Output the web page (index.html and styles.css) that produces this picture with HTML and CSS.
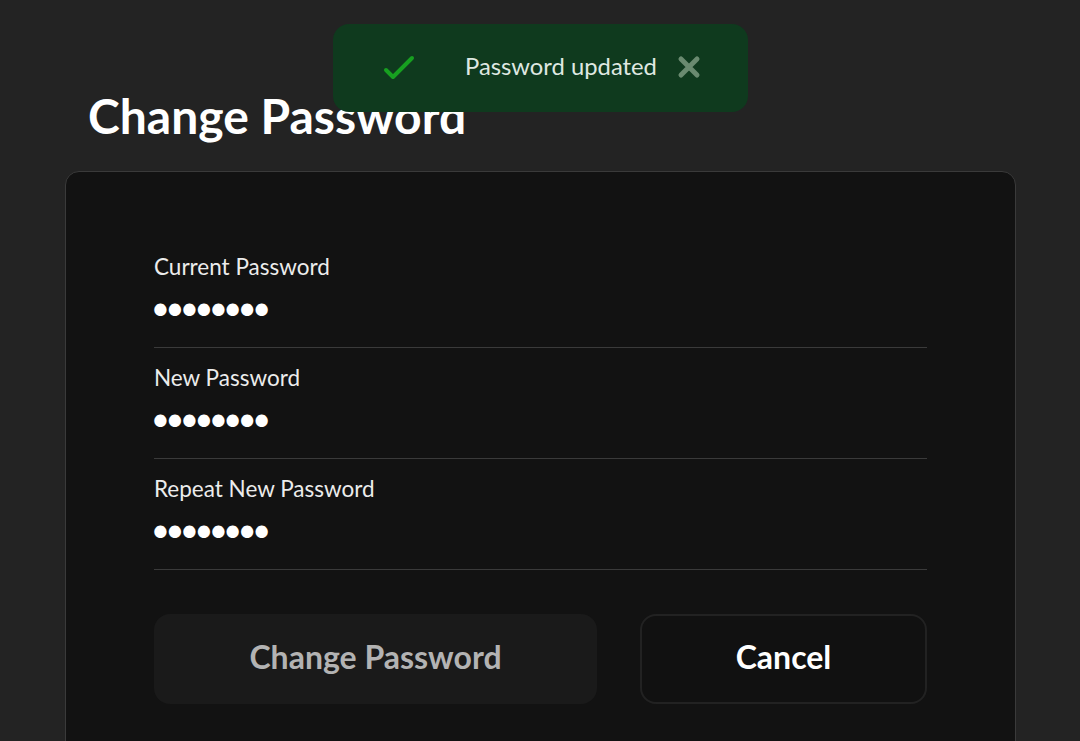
FILE: index.html
```html
<!DOCTYPE html>
<html lang="en">
<head>
    <meta charset="UTF-8">
    <meta name="viewport" content="width=device-width, initial-scale=1.0">
    <title>Change Password</title>
    <link rel="stylesheet" href="styles.css">
</head>
<body>
    <div class="page">
        <h1>Change Password</h1>

        <!-- Password form -->
        <div class="card">
            <div class="field">
                <label for="current">Current Password</label>
                <input type="password" id="current" value="password">
            </div>
            <div class="field">
                <label for="new">New Password</label>
                <input type="password" id="new" value="password">
            </div>
            <div class="field">
                <label for="repeat">Repeat New Password</label>
                <input type="password" id="repeat" value="password">
            </div>

            <div class="actions">
                <button class="btn btn-primary">Change Password</button>
                <button class="btn btn-secondary">Cancel</button>
            </div>
        </div>
    </div>

    <!-- Toast -->
    <div class="toast">
        <svg class="toast-check" width="32" height="28" viewBox="0 0 32 28">
            <path d="M3 16 L10 23 L29 4" fill="none" stroke="#17a020" stroke-width="4" stroke-linecap="round" stroke-linejoin="round"/>
        </svg>
        <span class="toast-text">Password updated</span>
        <svg class="toast-close" width="24" height="24" viewBox="0 0 24 24">
            <path d="M4 4 L20 20 M20 4 L4 20" fill="none" stroke="#6a8a70" stroke-width="5" stroke-linecap="round"/>
        </svg>
    </div>
</body>
</html>
```

FILE: styles.css
```css
:root {
    --bg-color: #232323;
    --card-bg: #121212;
    --card-border: #3a3a3a;
    --divider: #3a3a3a;
    --text-color: #f2f2f2;
    --toast-bg: #0f3a1e;
}

* {
    box-sizing: border-box;
    margin: 0;
    padding: 0;
}

body {
    background-color: var(--bg-color);
    color: var(--text-color);
    font-family: Lato, 'Noto Sans', sans-serif;
    height: 741px;
    overflow: hidden;
}

.page {
    padding: 88px 64px 0 65px;
}

h1 {
    font-size: 48px;
    font-weight: 700;
    line-height: 56px;
    margin: 0 0 27px 23px;
    color: #fff;
}

.card {
    background-color: var(--card-bg);
    border: 1px solid var(--card-border);
    border-radius: 14px;
    padding: 80px 88px 60px 88px;
    min-height: 600px;
}

.field {
    display: flex;
    flex-direction: column;
    border-bottom: 1px solid var(--divider);
    padding-bottom: 20px;
    margin-bottom: 15px;
}

.field label {
    font-size: 22.5px;
    line-height: 30px;
    color: #ececec;
    margin-bottom: 6px;
}

/* big round bullets for the masked value */
.field input {
    background: transparent;
    border: none;
    outline: none;
    color: #fff;
    font-family: 'DejaVu Sans', sans-serif;
    font-size: 42px;
    letter-spacing: -10.3px;
    height: 39px;
    line-height: 39px;
    padding: 0;
    padding-top: 8px;
    margin-left: -6px;
}

.actions {
    display: flex;
    gap: 43px;
    margin-top: 44px;
}

.btn {
    height: 90px;
    border-radius: 16px;
    font-family: Lato, 'Noto Sans', sans-serif;
    font-size: 32px;
    font-weight: 700;
    padding-bottom: 5px;
    cursor: pointer;
}

.btn-primary {
    flex: 0 0 443px;
    background-color: #1a1a1a;
    border: none;
    color: #b3b3b3;
}

.btn-secondary {
    flex: 1;
    background-color: #111;
    border: 2px solid #222;
    color: #fff;
}

.toast {
    position: absolute;
    top: 24px;
    left: 333px;
    width: 415px;
    height: 88px;
    background-color: var(--toast-bg);
    border-radius: 16px;
    display: flex;
    align-items: center;
    padding-left: 50px;
}

.toast-check {
    margin-right: 50px;
}

.toast-text {
    font-size: 23.8px;
    color: #dfe8e1;
    margin-top: -4px;
}

.toast-close {
    margin-left: 20px;
    margin-top: -2px;
}
```
